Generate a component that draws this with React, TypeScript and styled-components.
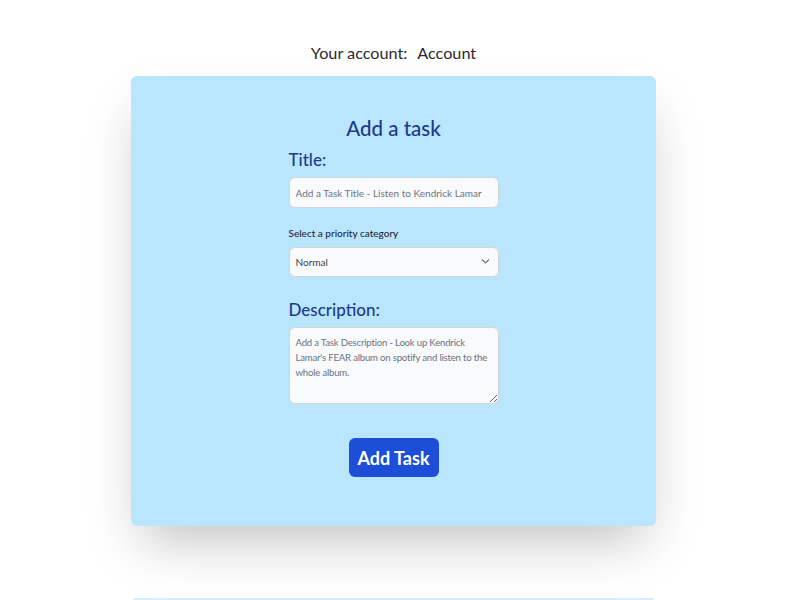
import React from "react";
import styled, { createGlobalStyle } from "styled-components";

const FONT = `"Lato", "Noto Sans", sans-serif`;

const Global = createGlobalStyle`
  html, body { margin: 0; padding: 0; background: #ffffff; }
  body { font-family: ${FONT}; }
  * { box-sizing: border-box; }
`;

const Page = styled.div`
  width: 787px;
  display: flex;
  flex-direction: column;
  align-items: center;
  padding-top: 42px;
`;

const AccountLine = styled.div`
  display: flex;
  gap: 10px;
  font-size: 16.2px;
  line-height: 22px;
  color: #2b2b2b;
  margin-bottom: 12px;
`;

const Card = styled.div`
  width: 525px;
  height: 450px;
  background: #bae6fd;
  border-radius: 6px;
  box-shadow: 0 25px 50px -12px rgba(0, 0, 0, 0.25);
  display: flex;
  flex-direction: column;
  align-items: center;
  padding-top: 38px;
`;

const NextCard = styled.div`
  width: 520px;
  height: 2px;
  margin-top: 72px;
  border-top: 2px solid #d6eefb;
`;

const Heading = styled.h2`
  margin: 0 0 7px;
  font-size: 20.5px;
  line-height: 28px;
  font-weight: 500;
  color: #1e3a8a;
`;

const Form = styled.form`
  width: 210px;
  display: flex;
  flex-direction: column;
`;

const BigLabel = styled.label`
  font-size: 17px;
  line-height: 22px;
  font-weight: 500;
  color: #1e3a8a;
  margin-bottom: 6px;
`;

const SmallLabel = styled.label`
  font-size: 10px;
  line-height: 14px;
  font-weight: 500;
  color: #1f2937;
  margin-bottom: 7px;
`;

const fieldBase = `
  width: 100%;
  border: 1px solid #d1d5db;
  background: #f9fafb;
  border-radius: 6px;
  font-family: ${FONT};
  font-size: 10px;
  color: #374151;
  padding: 0 6px;
  outline: none;
`;

const TextInput = styled.input`
  ${fieldBase}
  height: 31px;
  &::placeholder { color: #6b7280; }
`;

const SelectWrap = styled.div`
  position: relative;
  width: 100%;
`;

const Select = styled.select`
  ${fieldBase}
  height: 30px;
  appearance: none;
  -webkit-appearance: none;
`;

const Chevron = styled.svg`
  position: absolute;
  right: 9px;
  top: 11px;
  pointer-events: none;
`;

const TextArea = styled.textarea`
  ${fieldBase}
  height: 77px;
  padding: 7px 1px 7px 6px;
  font-size: 9.6px;
  letter-spacing: -0.2px;
  line-height: 15px;
  resize: vertical;
  &::placeholder { color: #6b7280; }
`;

const Gap = styled.div<{ $h: number }>`
  height: ${(p) => p.$h}px;
`;

const ButtonRow = styled.div`
  display: flex;
  justify-content: center;
  margin-top: 34px;
`;

const Button = styled.button`
  width: 90px;
  height: 39px;
  background: #1d4ed8;
  border: none;
  border-radius: 6px;
  color: #ffffff;
  font-family: ${FONT};
  font-weight: 700;
  font-size: 18px;
  cursor: pointer;
`;

export default function App() {
  return (
    <>
      <Global />
      <Page>
        <AccountLine>
          <span>Your account:</span>
          <span>Account</span>
        </AccountLine>
        <Card>
          <Heading>Add a task</Heading>
          <Form onSubmit={(e) => e.preventDefault()}>
            <BigLabel htmlFor="title">Title:</BigLabel>
            <TextInput id="title" placeholder="Add a Task Title - Listen to Kendrick Lamar" />
            <Gap $h={18} />
            <SmallLabel htmlFor="prio">Select a priority category</SmallLabel>
            <SelectWrap>
              <Select id="prio" defaultValue="Normal">
                <option>Normal</option>
                <option>High</option>
                <option>Low</option>
              </Select>
              <Chevron width="9" height="7" viewBox="0 0 9 7" fill="none">
                <path d="M1 1.5 L4.5 5 L8 1.5" stroke="#6b7280" strokeWidth="1.2" />
              </Chevron>
            </SelectWrap>
            <Gap $h={22} />
            <BigLabel htmlFor="desc">Description:</BigLabel>
            <TextArea
              id="desc"
              placeholder="Add a Task Description - Look up Kendrick Lamar's FEAR album on spotify and listen to the whole album."
            />
            <ButtonRow>
              <Button type="submit">Add Task</Button>
            </ButtonRow>
          </Form>
        </Card>
        <NextCard />
      </Page>
    </>
  );
}
